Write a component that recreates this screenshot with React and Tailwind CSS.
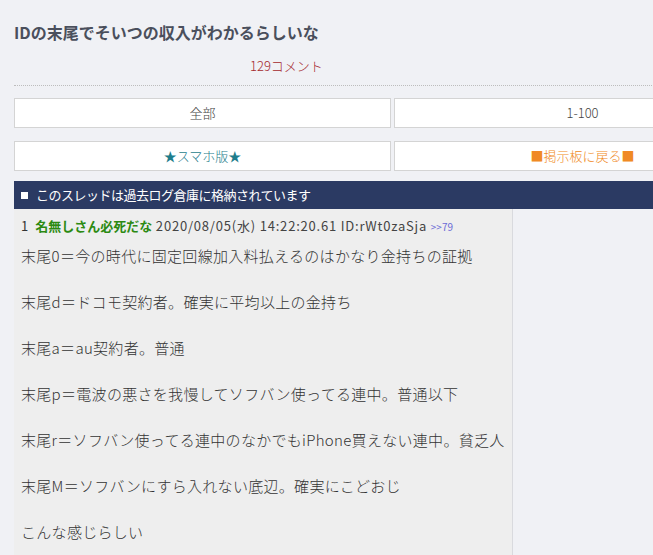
import React from "react";

const lines = [
  "末尾0＝今の時代に固定回線加入料払えるのはかなり金持ちの証拠",
  "末尾d＝ドコモ契約者。確実に平均以上の金持ち",
  "末尾a＝au契約者。普通",
  "末尾p＝電波の悪さを我慢してソフバン使ってる連中。普通以下",
  "末尾r＝ソフバン使ってる連中のなかでもiPhone買えない連中。貧乏人",
  "末尾M＝ソフバンにすら入れない底辺。確実にこどおじ",
  "こんな感じらしい",
];

export default function App() {
  return (
    <div
      className="w-[653px] h-[555px] overflow-hidden bg-[#f0f1f5] text-[#333]"
      style={{ fontFamily: '"Noto Sans CJK JP", "Noto Sans", sans-serif' }}
    >
      <div className="w-[800px] pl-[14px]">
        <div className="w-[786px]">
          <h1 className="pt-[20px] text-[16px] leading-[24px] font-bold text-[#4a4f5c]">
            IDの末尾でそいつの収入がわかるらしいな
          </h1>
          <div className="pt-[12px] pl-[236px] text-[13px] leading-[20px] font-light text-[#a4282c]">
            129コメント
          </div>
          <div className="mt-[9px] border-b border-dotted border-[#bdbdbd]"></div>
        </div>

        <div className="w-[757px] font-light">
          <div className="mt-[12px] grid grid-cols-2 gap-[3px]">
            <div className="h-[30px] bg-white border border-[#d4d4d4] flex items-center justify-center text-[13px] text-[#444]">
              全部
            </div>
            <div className="h-[30px] bg-white border border-[#d4d4d4] flex items-center justify-center text-[13px] text-[#444]">
              1-100
            </div>
          </div>
          <div className="mt-[13px] grid grid-cols-2 gap-[3px]">
            <div className="h-[30px] bg-white border border-[#d4d4d4] flex items-center justify-center text-[13px] text-[#1e7d8c]">
              ★スマホ版★
            </div>
            <div className="h-[30px] bg-white border border-[#d4d4d4] flex items-center justify-center text-[13px] text-[#f08a24]">
              ■掲示板に戻る■
            </div>
          </div>
        </div>

        <div className="mt-[10px] w-[786px] h-[28px] bg-[#2b3a63] text-white flex items-center pl-[7px] text-[13px] tracking-[-0.5px]">
          <span className="inline-block w-[7px] h-[7px] bg-white mr-[8px]"></span>
          <span>このスレッドは過去ログ倉庫に格納されています</span>
        </div>

        <div className="w-[499px] h-[400px] bg-[#eeeeee] border-r border-[#d9dade] pl-[7px] pt-[7px]">
          <div className="text-[13px] leading-[20px] text-[#444] whitespace-nowrap">
            <span className="text-[#333] mr-[4px]">1 </span>
            <span className="font-bold text-[#2c8a12]">名無しさん必死だな</span>
            <span className="tracking-[0.8px]"> 2020/08/05(水) 14:22:20.61 ID:rWt0zaSja </span>
            <span className="text-[10px] text-[#6b6bd6]">&gt;&gt;79</span>
          </div>
          <div className="mt-[7px] text-[15px] leading-[23px] font-light tracking-[0.3px] text-[#333] whitespace-nowrap">
            {lines.map((l, i) => (
              <React.Fragment key={i}>
                {i > 0 && (
                  <>
                    <br />
                    <br />
                  </>
                )}
                {l}
              </React.Fragment>
            ))}
          </div>
        </div>
      </div>
    </div>
  );
}
